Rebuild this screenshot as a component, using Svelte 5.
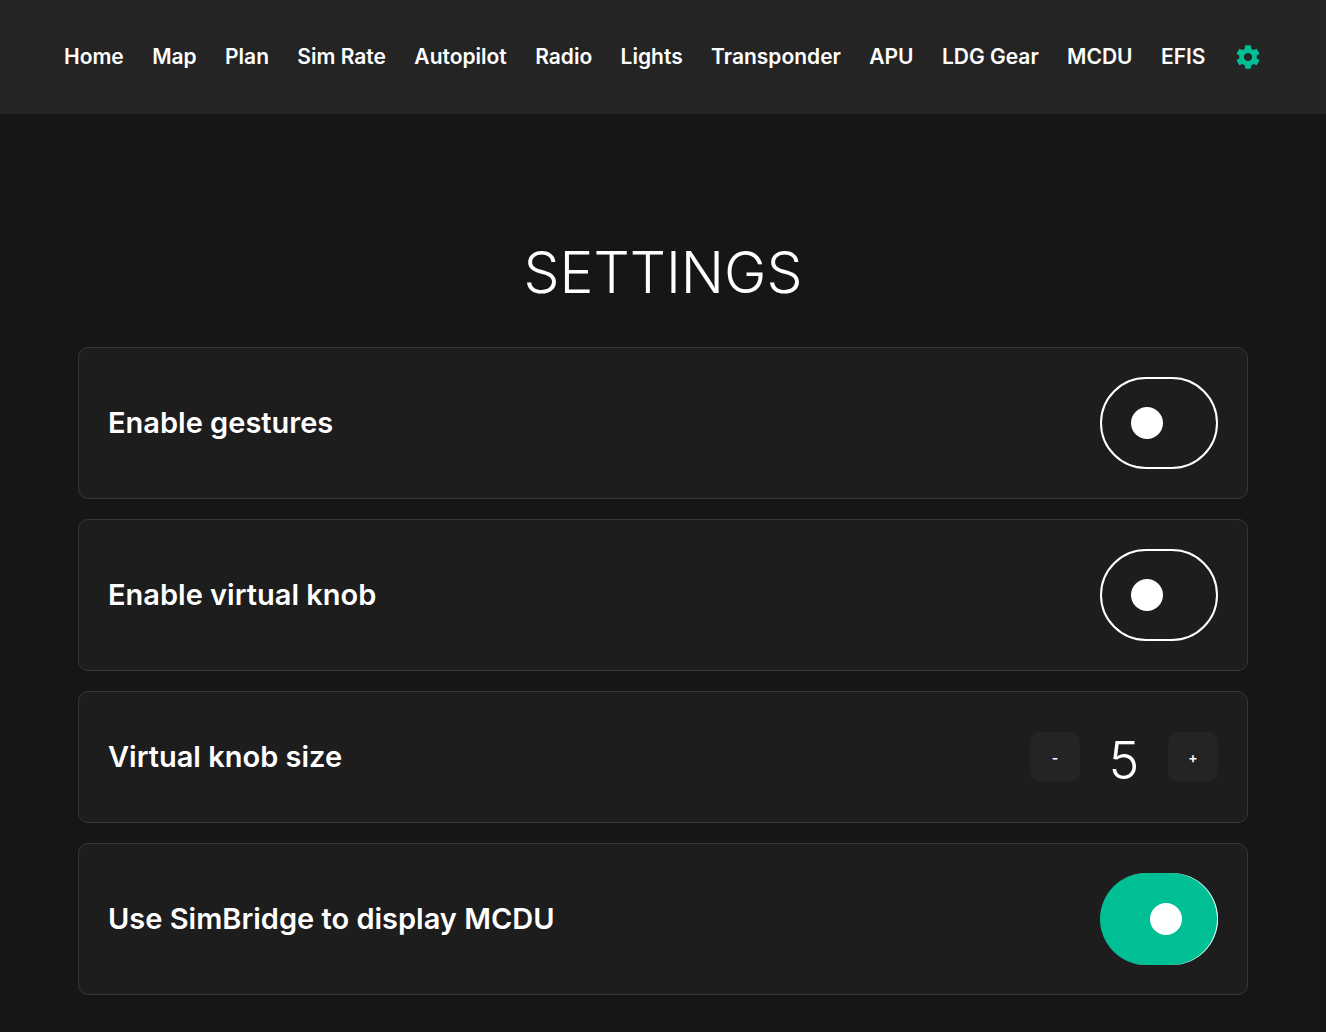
<script lang="ts">
  interface NavLink {
    href: string;
    label: string;
  }

  const LINKS: NavLink[] = [
    { href: '#home', label: 'Home' },
    { href: '#map', label: 'Map' },
    { href: '#plan', label: 'Plan' },
    { href: '#simrate', label: 'Sim Rate' },
    { href: '#autopilot', label: 'Autopilot' },
    { href: '#radio', label: 'Radio' },
    { href: '#lights', label: 'Lights' },
    { href: '#transponder', label: 'Transponder' },
    { href: '#apu', label: 'APU' },
    { href: '#gear', label: 'LDG Gear' },
    { href: '#mcdu', label: 'MCDU' },
    { href: '#efis', label: 'EFIS' },
  ];

  let gestures = $state(false);
  let virtualKnob = $state(false);
  let knobSize = $state(5);
  let simBridge = $state(true);
</script>

<nav class="navbar">
  {#each LINKS as link (link.href)}
    <a class="nav-link" href={link.href}>{link.label}</a>
  {/each}
  <a class="nav-settings" href="#settings" aria-label="Settings">
    <svg viewBox="0 0 24 24" width="28" height="28" fill="currentColor">
      <path
        d="M19.43 12.98c.04-.32.07-.64.07-.98s-.03-.66-.07-.98l2.11-1.65c.19-.15.24-.42.12-.64l-2-3.46c-.12-.22-.39-.3-.61-.22l-2.49 1c-.52-.4-1.08-.73-1.69-.98l-.38-2.65C14.46 2.18 14.25 2 14 2h-4c-.25 0-.46.18-.49.42l-.38 2.65c-.61.25-1.17.59-1.69.98l-2.49-1c-.23-.09-.49 0-.61.22l-2 3.46c-.13.22-.07.49.12.64l2.11 1.65c-.04.32-.07.65-.07.98s.03.66.07.98l-2.11 1.65c-.19.15-.24.42-.12.64l2 3.46c.12.22.39.3.61.22l2.49-1c.52.4 1.08.73 1.69.98l.38 2.65c.03.24.24.42.49.42h4c.25 0 .46-.18.49-.42l.38-2.65c.61-.25 1.17-.59 1.69-.98l2.49 1c.23.09.49 0 .61-.22l2-3.46c.12-.22.07-.49-.12-.64l-2.11-1.65zM12 15.5c-1.93 0-3.5-1.57-3.5-3.5s1.57-3.5 3.5-3.5 3.5 1.57 3.5 3.5-1.57 3.5-3.5 3.5z"
      />
    </svg>
  </a>
</nav>

<main class="page">
  <h1 class="title">SETTINGS</h1>

  <div class="settings">
    <div class="card">
      <label class="card-label" for="gestures">Enable gestures</label>
      <input class="toggle" id="gestures" type="checkbox" bind:checked={gestures} />
    </div>

    <div class="card">
      <label class="card-label" for="virtual-knob">Enable virtual knob</label>
      <input class="toggle" id="virtual-knob" type="checkbox" bind:checked={virtualKnob} />
    </div>

    <div class="card">
      <span class="card-label" id="knob-size">Virtual knob size</span>
      <div class="stepper" role="group" aria-labelledby="knob-size">
        <button class="step-btn" onclick={() => (knobSize -= 1)}>-</button>
        <output class="step-value">{knobSize}</output>
        <button class="step-btn" onclick={() => (knobSize += 1)}>+</button>
      </div>
    </div>

    <div class="card">
      <label class="card-label" for="simbridge">Use SimBridge to display MCDU</label>
      <input class="toggle" id="simbridge" type="checkbox" bind:checked={simBridge} />
    </div>
  </div>
</main>

<style>
  :global(body) {
    background: #161616;
    color: #fff;
    font-family: Inter, 'Liberation Sans', sans-serif;
  }

  .navbar {
    display: flex;
    align-items: center;
    justify-content: space-between;
    padding: 40px 64px;
    background: #242424;
  }

  .nav-link {
    color: #fff;
    font-size: 21px;
    font-weight: 600;
    line-height: 34px;
    text-decoration: none;
    white-space: nowrap;
  }

  .nav-settings {
    display: flex;
    color: #00bf95;
  }

  .page {
    padding: 123px 78px 36px;
  }

  .title {
    margin: 0 0 38px;
    font-size: 57px;
    font-weight: 300;
    line-height: 72px;
    text-align: center;
  }

  .settings {
    display: flex;
    flex-direction: column;
    gap: 20px;
  }

  .card {
    display: flex;
    align-items: center;
    justify-content: space-between;
    padding: 29px;
    border: 1px solid #363636;
    border-radius: 10px;
    background: #1d1d1d;
  }

  .card-label {
    font-size: 29px;
    font-weight: 600;
    line-height: 36px;
  }

  .toggle {
    appearance: none;
    box-sizing: border-box;
    display: flex;
    align-items: center;
    width: 118px;
    height: 92px;
    margin: 0;
    padding: 0 29px;
    border: 2px solid #fff;
    border-radius: 46px;
    cursor: pointer;
  }

  .toggle::before {
    content: '';
    width: 32px;
    height: 32px;
    border-radius: 50%;
    background: #fff;
  }

  .toggle:checked {
    justify-content: flex-end;
    padding: 0 36px;
    border: none;
    background: #00bf95;
    box-shadow: inset -1px 0 #fff;
  }

  .stepper {
    display: flex;
    align-items: center;
  }

  .step-btn {
    width: 50px;
    height: 50px;
    padding: 0;
    border: none;
    border-radius: 10px;
    background: #242424;
    color: #fff;
    font-family: inherit;
    font-size: 14px;
    font-weight: 600;
    cursor: pointer;
  }

  .step-value {
    width: 88px;
    font-size: 52px;
    font-weight: 300;
    line-height: 64px;
    padding-top: 8px;
    text-align: center;
  }
</style>
